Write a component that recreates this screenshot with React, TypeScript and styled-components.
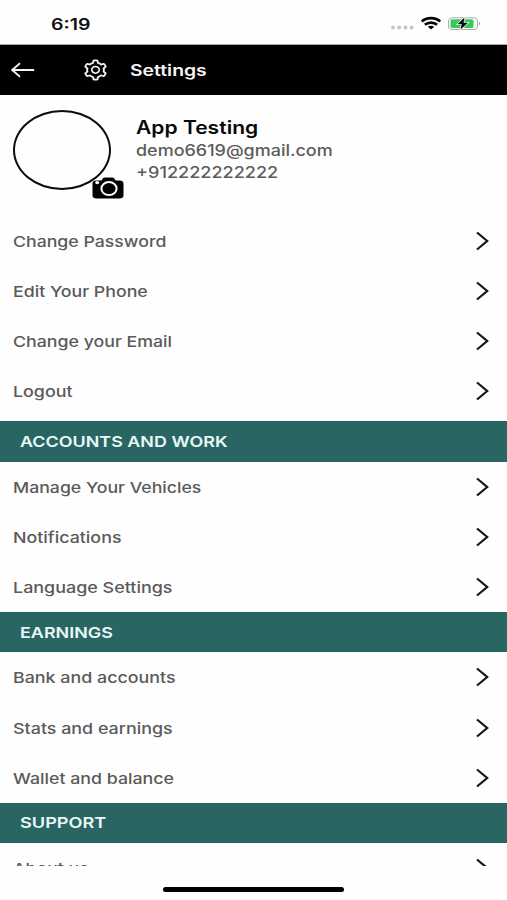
import React from 'react'
import styled, { createGlobalStyle } from 'styled-components'
import { AiOutlineSetting } from 'react-icons/ai'

const GlobalStyle = createGlobalStyle`
  * {
    box-sizing: border-box;
  }
  body {
    margin: 0;
    background: #fefefe;
    font-family: Inter, 'Liberation Sans', sans-serif;
    -webkit-font-smoothing: antialiased;
  }
`

const Screen = styled.div`
  display: flex;
  flex-direction: column;
  width: 507px;
  height: 900px;
  overflow: hidden;
  background: #fefefe;
`

// wide lettering, every label in the app uses it
const WideText = styled.span<{ $stretch?: number }>`
  display: block;
  width: max-content;
  white-space: nowrap;
  transform: scaleX(${({ $stretch }) => $stretch ?? 1.2});
  transform-origin: left center;
`

const StatusBar = styled.div`
  display: flex;
  justify-content: space-between;
  flex: none;
  height: 45px;
  padding: 14px 27px 0 50.5px;
  border-bottom: 1px solid #a9a9a9;
`

const Clock = styled(WideText)`
  font-size: 16px;
  line-height: 20px;
  font-weight: 600;
  color: #111;
`

const StatusIcons = styled.div`
  display: flex;
  align-items: flex-start;
  padding-top: 2px;

  svg {
    display: block;
  }
`

const Header = styled.header`
  display: flex;
  align-items: center;
  flex: none;
  height: 50px;
  padding-left: 11px;
  background: #000;
  color: #f4f4f4;
`

const BackIcon = styled.svg`
  width: 24px;
  height: 16px;
  margin-right: 47px;
`

const GearIcon = styled(AiOutlineSetting)`
  width: 27px;
  height: 24px;
  margin-right: 20.5px;
`

const Title = styled(WideText)`
  font-size: 16px;
  font-weight: 600;
`

const Content = styled.main`
  flex: none;
  height: 771px;
  overflow: hidden;
`

const Profile = styled.section`
  display: flex;
  height: 120.6px;
  padding: 15px 0 0 13px;
`

const Avatar = styled.div`
  position: relative;
  width: 98px;
  height: 80px;
  margin-right: 24.5px;
  border: 2px solid #0c0c0c;
  border-radius: 50%;
`

const CameraIcon = styled.svg`
  position: absolute;
  left: 77px;
  top: 65px;
  width: 32px;
  height: 23px;
`

const Info = styled.div`
  padding-top: 6px;
  color: #5c5c5c;
`

const Name = styled(WideText)`
  margin-bottom: 1px;
  font-size: 18px;
  line-height: 23px;
  font-weight: 600;
  color: #080808;
`

const Detail = styled(WideText)`
  font-size: 15.5px;
  line-height: 22px;
  font-weight: 500;
`

const Row = styled.div`
  display: flex;
  align-items: center;
  justify-content: space-between;
  height: 50.2px;
  padding: 0 18.5px 0 13px;
`

const RowLabel = styled(WideText)`
  padding-top: 1px;
  font-size: 15px;
  font-weight: 500;
  color: #5a5a5a;
`

const Chevron = styled.svg`
  width: 13px;
  height: 20px;
`

const Group = styled.section<{ $gap?: number }>`
  padding-bottom: ${({ $gap }) => $gap ?? 0}px;
`

const Band = styled.h2`
  display: flex;
  align-items: center;
  height: 40.2px;
  margin: 0;
  padding-left: 19.5px;
  background: #296663;
`

const BandLabel = styled(WideText)`
  font-size: 15px;
  font-weight: 600;
  color: #e9f8f6;
`

const HomeArea = styled.footer`
  display: flex;
  justify-content: center;
  flex: none;
  height: 34px;
  padding-top: 21px;
`

const HomeIndicator = styled.div`
  width: 181px;
  height: 5px;
  border-radius: 3px;
  background: #000;
`

type Item = [label: string, stretch: number]

const groups: { title?: Item; gap?: number; items: Item[] }[] = [
  {
    gap: 5,
    items: [
      ['Change Password', 1.18],
      ['Edit Your Phone', 1.185],
      ['Change your Email', 1.184],
      ['Logout', 1.19],
    ],
  },
  {
    title: ['ACCOUNTS AND WORK', 1.195],
    items: [
      ['Manage Your Vehicles', 1.18],
      ['Notifications', 1.19],
      ['Language Settings', 1.195],
    ],
  },
  {
    title: ['EARNINGS', 1.195],
    items: [
      ['Bank and accounts', 1.19],
      ['Stats and earnings', 1.192],
      ['Wallet and balance', 1.186],
    ],
  },
  {
    title: ['SUPPORT', 1.21],
    items: [['About us', 1.18]],
  },
]

function StatusGlyphs() {
  return (
    <StatusIcons>
      <svg width="90" height="16" viewBox="0 0 90 16">
        <g fill="#c5c5c5">
          <circle cx="3" cy="11.6" r="2" />
          <circle cx="9.2" cy="11.6" r="2" />
          <circle cx="15.4" cy="11.6" r="2" />
          <circle cx="21.6" cy="11.6" r="2" />
        </g>
        <g fill="none" stroke="#050505" strokeWidth="2.7">
          <path d="M31.8 5.4C36.5 .9 45.5 .9 50.2 5.4" />
          <path d="M34.9 8.7C38.2 5.8 43.8 5.8 47.1 8.7" />
        </g>
        <path d="M37.8 10.8C39.5 9.4 42.5 9.4 44.2 10.8L41 13.5Z" fill="#050505" />
        <rect x="58.5" y="1.7" width="29" height="11.8" rx="3.8" fill="#fff" stroke="#aaa" strokeWidth="1.1" />
        <rect x="60.5" y="3.3" width="23" height="8.6" rx="1.5" fill="#35cb5c" />
        <path d="M89 5.5Q91 7.6 89 9.7Z" fill="#999" />
        <path
          d="M74.5 1.6L67.5 8.3H71.8L70.4 13.4L78 6.7H73.5Z"
          fill="#050505"
          stroke="#fff"
          strokeWidth="1.4"
          paintOrder="stroke"
        />
      </svg>
    </StatusIcons>
  )
}

function Camera() {
  return (
    <CameraIcon viewBox="0 0 32 23">
      <path
        d="M4 3.5H9.5L11 1.2Q11.6 .5 12.6 .5H20.5Q21.5 .5 22.1 1.2L23.6 3.5H27.5Q31.5 3.5 31.5 6.5V18.500Q31.5 21.5 27.5 21.5H4.5Q.5 21.5 .5 18.5V6.5Q.5 3.5 4 3.5Z"
        fill="#030303"
      />
      <ellipse cx="17" cy="11.6" rx="7.6" ry="6.5" fill="#030303" stroke="#fff" strokeWidth="2" />
      <ellipse cx="5.2" cy="5.6" rx="2" ry="1.6" fill="#fff" />
    </CameraIcon>
  )
}

function SettingsRow({ label, stretch }: { label: string; stretch: number }) {
  return (
    <Row>
      <RowLabel $stretch={stretch}>{label}</RowLabel>
      <Chevron viewBox="0 0 13 20" fill="none" stroke="#151515" strokeWidth="2.2">
        <path d="M1 1.5L11.2 10L1 18.5" />
      </Chevron>
    </Row>
  )
}

export default function App() {
  return (
    <>
      <GlobalStyle />
      <Screen>
        <StatusBar>
          <Clock $stretch={1.22}>6:19</Clock>
          <StatusGlyphs />
        </StatusBar>
        <Header>
          <BackIcon viewBox="0 0 24 16" fill="none" stroke="currentColor" strokeWidth="1.8">
            <path d="M1.2 8H23.2M9 1.2L1.2 8L9 14.8" />
          </BackIcon>
          <GearIcon preserveAspectRatio="none" />
          <Title $stretch={1.21}>Settings</Title>
        </Header>
        <Content>
          <Profile>
            <Avatar>
              <Camera />
            </Avatar>
            <Info>
              <Name $stretch={1.17}>App Testing</Name>
              <Detail $stretch={1.16}>demo6619@gmail.com</Detail>
              <Detail $stretch={1.165}>+912222222222</Detail>
            </Info>
          </Profile>
          {groups.map(({ title, gap, items }, i) => (
            <Group key={i} $gap={gap}>
              {title && (
                <Band>
                  <BandLabel $stretch={title[1]}>{title[0]}</BandLabel>
                </Band>
              )}
              {items.map(([label, stretch]) => (
                <SettingsRow key={label} label={label} stretch={stretch} />
              ))}
            </Group>
          ))}
        </Content>
        <HomeArea>
          <HomeIndicator />
        </HomeArea>
      </Screen>
    </>
  )
}
